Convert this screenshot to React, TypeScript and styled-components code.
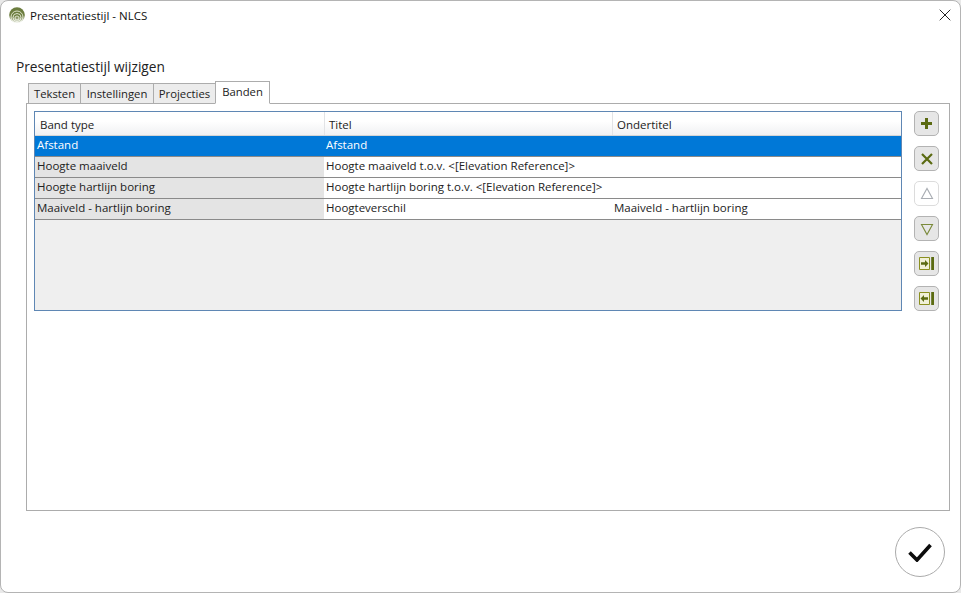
import React from 'react';
import styled, { createGlobalStyle } from 'styled-components';
import { X } from 'lucide-react';

const GlobalStyle = createGlobalStyle`
  html, body { margin: 0; padding: 0; background: #e9e9e9; }
  body { font-family: "Open Sans", "Noto Sans", "Liberation Sans", sans-serif; font-size: 11.5px; color: #1a1a1a; }
`;

const Window = styled.div`
  width: 961px;
  height: 593px;
  box-sizing: border-box;
  background: #fff;
  border: 1px solid #b4b4b4;
  border-radius: 8px;
  display: flex;
  flex-direction: column;
  overflow: hidden;
`;

const TitleBar = styled.header`
  height: 30px;
  box-sizing: border-box;
  flex: none;
  display: flex;
  align-items: center;
  padding: 0 5px 2px 8px;
  gap: 5px;
`;

const TitleText = styled.span`
  flex: 1;
  font-size: 11.5px;
  color: #111;
`;

const CloseButton = styled.button`
  border: 0;
  background: none;
  padding: 0;
  width: 20px;
  height: 20px;
  display: flex;
  color: #222;
`;

const Heading = styled.h1`
  margin: 26px 0 0 15px;
  font-size: 13.7px;
  line-height: 20px;
  font-weight: 400;
  color: #222;
`;

const Content = styled.div`
  margin: 4px 10px 0 25px;
  display: flex;
  flex-direction: column;
`;

const TabRow = styled.div`
  display: flex;
  align-items: flex-end;
  height: 23px;
  margin-bottom: -1px;
  padding-left: 2px;
  position: relative;
  z-index: 1;
`;

const Tab = styled.div<{ $active?: boolean; $width: number }>`
  box-sizing: border-box;
  width: ${({ $width }) => $width}px;
  height: ${({ $active }) => ($active ? '23px' : '21px')};
  padding-bottom: ${({ $active }) => ($active ? '2px' : '1px')};
  display: flex;
  align-items: center;
  justify-content: center;
  background: ${({ $active }) => ($active ? '#fff' : '#ececec')};
  border: 1px solid #acacac;
  border-bottom-color: ${({ $active }) => ($active ? '#fff' : '#acacac')};
  margin-right: -1px;
  font-size: 11.3px;
  color: #222;
`;

const Panel = styled.section`
  box-sizing: border-box;
  height: 408px;
  border: 1px solid #acacac;
  background: #fff;
  padding: 7px 10px 0 7px;
  display: flex;
  gap: 12px;
  align-items: flex-start;
`;

const Grid = styled.div`
  box-sizing: border-box;
  width: 868px;
  height: 200px;
  border: 1px solid #5f87b4;
  background: #efefef;
`;

const HeaderRow = styled.div`
  display: grid;
  grid-template-columns: 289px 288px 1fr;
  height: 24px;
  background: linear-gradient(#ffffff 0%, #ffffff 40%, #f0f1f3 100%);
  border-bottom: 1px solid #d5d5d5;
  box-sizing: border-box;
`;

const HeaderCell = styled.div`
  display: flex;
  align-items: center;
  padding: 2px 0 0 4px;
  border-left: 1px solid #e2e3e6;
  color: #222;

  &:first-child {
    border-left-color: transparent;
  }
`;

const Row = styled.div<{ $selected?: boolean }>`
  display: grid;
  grid-template-columns: 289px 288px 1fr;
  height: 21px;
  box-sizing: border-box;
  border-bottom: 1px solid #8a8a8a;
  background: ${({ $selected }) => ($selected ? '#0078d7' : '#fff')};
  color: ${({ $selected }) => ($selected ? '#fff' : '#222')};
`;

const Cell = styled.div<{ $first?: boolean; $selected?: boolean }>`
  display: flex;
  align-items: center;
  padding: 0 0 3px 2px;
  white-space: nowrap;
  background: ${({ $first, $selected }) => ($first && !$selected ? '#e4e4e4' : 'transparent')};
`;

const Toolbar = styled.div`
  display: flex;
  flex-direction: column;
  gap: 10px;
`;

const ToolButton = styled.button<{ $disabled?: boolean }>`
  box-sizing: border-box;
  width: 25px;
  height: 25px;
  padding: 0;
  border-radius: 5px;
  display: flex;
  align-items: center;
  justify-content: center;
  border: 1px solid ${({ $disabled }) => ($disabled ? '#dcdcdc' : '#b3b3b3')};
  background: ${({ $disabled }) => ($disabled ? '#fff' : '#e6e6e6')};
`;

const Footer = styled.footer`
  display: flex;
  justify-content: flex-end;
  padding: 16px 15px 0 0;
`;

const ConfirmButton = styled.button`
  box-sizing: border-box;
  width: 50px;
  height: 50px;
  padding: 0;
  border-radius: 50%;
  border: 1px solid #ababab;
  background: #fff;
  display: flex;
  align-items: center;
  justify-content: center;
`;

const olive = '#5b6b12';

const Logo = () => (
  <svg width="16" height="16" viewBox="0 0 16 16" fill="none">
    <defs>
      <linearGradient id="logoFade" x1="0" y1="0" x2="0" y2="1">
        <stop offset="0.55" stopColor="#fff" stopOpacity="0" />
        <stop offset="1" stopColor="#fff" stopOpacity="0.8" />
      </linearGradient>
    </defs>
    <circle cx="8" cy="8" r="7.8" fill="#6c7d3f" />
    <circle cx="8" cy="10" r="6" stroke="#e8ecd8" strokeWidth=".9" />
    <circle cx="8" cy="10.5" r="4" stroke="#e8ecd8" strokeWidth=".9" />
    <circle cx="8" cy="11" r="2" stroke="#e8ecd8" strokeWidth=".9" />
    <rect width="16" height="16" fill="url(#logoFade)" />
  </svg>
);

const PlusIcon = () => (
  <svg width="13" height="13" viewBox="0 0 13 13">
    <path d="M5 1h3v4h4v3H8v4H5V8H1V5h4z" fill={olive} />
  </svg>
);

const CrossIcon = () => (
  <svg width="14" height="14" viewBox="0 0 14 14">
    <path d="M2 2l10 10M12 2L2 12" stroke={olive} strokeWidth="2.2" />
  </svg>
);

const TriangleIcon = ({ down, muted }: { down?: boolean; muted?: boolean }) => (
  <svg width="14" height="14" viewBox="0 0 14 14" fill="none">
    <path
      d={down ? 'M1.5 2.5h11L7 12.5z' : 'M1.5 11.5h11L7 1.5z'}
      stroke={muted ? '#a9adb3' : '#7a8a3a'}
      strokeWidth="1.1"
    />
  </svg>
);

const MoveIcon = ({ left }: { left?: boolean }) => (
  <svg width="15" height="13" viewBox="0 0 15 13">
    <path d="M.5.5h10v12H.5z" fill="#f0f0d8" stroke="#8a8f20" />
    <path
      d={left ? 'M9 5.2H5V3L1.5 6.5 5 10V7.8h4z' : 'M2 5.2h4V3l3.5 3.5L6 10V7.8H2z'}
      fill={olive}
    />
    <path d="M12.2 0H15v13h-2.8z" fill={olive} />
  </svg>
);

const CheckIcon = () => (
  <svg width="26" height="20" viewBox="0 0 26 20" fill="none">
    <path d="M2.5 10.5l7.5 7.5L23.5 3" stroke="#0c0c0c" strokeWidth="3.6" />
  </svg>
);

const tabs = [
  { label: 'Teksten', width: 53 },
  { label: 'Instellingen', width: 74 },
  { label: 'Projecties', width: 63 },
  { label: 'Banden', width: 55 },
];
const columns = ['Band type', 'Titel', 'Ondertitel'];
const rows = [
  ['Afstand', 'Afstand', ''],
  ['Hoogte maaiveld', 'Hoogte maaiveld t.o.v. <[Elevation Reference]>', ''],
  ['Hoogte hartlijn boring', 'Hoogte hartlijn boring t.o.v. <[Elevation Reference]>', ''],
  ['Maaiveld - hartlijn boring', 'Hoogteverschil', 'Maaiveld - hartlijn boring'],
];

export default function App() {
  return (
    <>
      <GlobalStyle />
      <Window>
        <TitleBar>
          <Logo />
          <TitleText>Presentatiestijl - NLCS</TitleText>
          <CloseButton aria-label="Sluiten">
            <X size={20} strokeWidth={1.2} />
          </CloseButton>
        </TitleBar>
        <Heading>Presentatiestijl wijzigen</Heading>
        <Content>
          <TabRow>
            {tabs.map((tab) => (
              <Tab key={tab.label} $width={tab.width} $active={tab.label === 'Banden'}>{tab.label}</Tab>
            ))}
          </TabRow>
          <Panel>
            <Grid>
              <HeaderRow>
                {columns.map((column) => (
                  <HeaderCell key={column}>{column}</HeaderCell>
                ))}
              </HeaderRow>
              {rows.map((row, index) => (
                <Row key={row[0]} $selected={index === 0}>
                  {row.map((cell, cellIndex) => (
                    <Cell key={cellIndex} $first={cellIndex === 0} $selected={index === 0}>{cell}</Cell>
                  ))}
                </Row>
              ))}
            </Grid>
            <Toolbar>
              <ToolButton><PlusIcon /></ToolButton>
              <ToolButton><CrossIcon /></ToolButton>
              <ToolButton $disabled><TriangleIcon muted /></ToolButton>
              <ToolButton><TriangleIcon down /></ToolButton>
              <ToolButton><MoveIcon /></ToolButton>
              <ToolButton><MoveIcon left /></ToolButton>
            </Toolbar>
          </Panel>
        </Content>
        <Footer>
          <ConfirmButton aria-label="Bevestigen"><CheckIcon /></ConfirmButton>
        </Footer>
      </Window>
    </>
  );
}
